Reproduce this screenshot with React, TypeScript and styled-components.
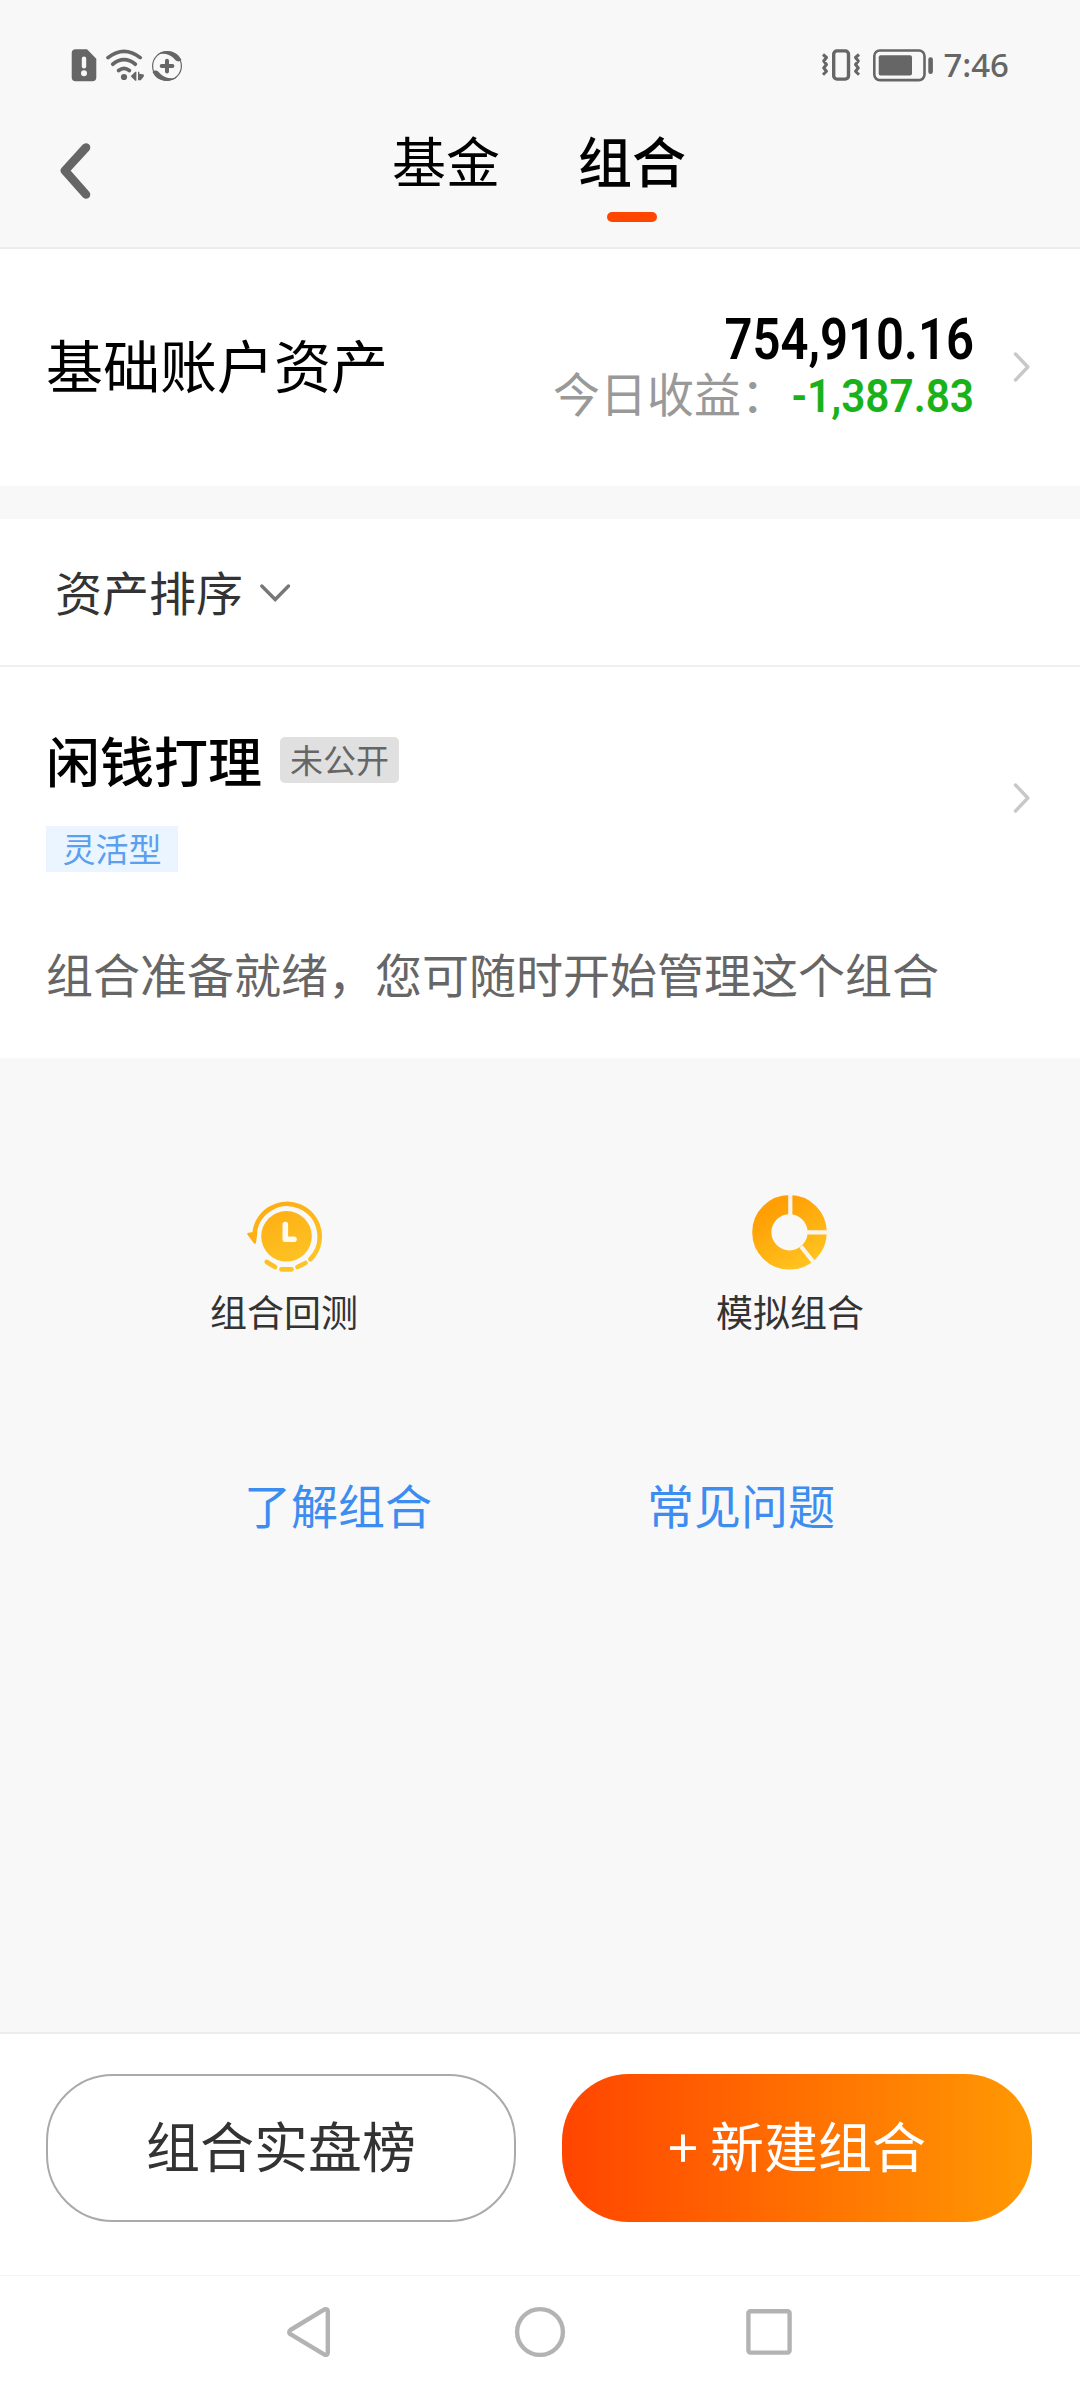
import React from "react";
import styled, { createGlobalStyle } from "styled-components";

const GlobalStyle = createGlobalStyle`
  * { box-sizing: border-box; }
  body { margin: 0; background: #f8f8f8; }
  button { font: inherit; margin: 0; padding: 0; border: 0; background: none; }
  svg { display: block; flex: none; }
`;

const Screen = styled.div`
  width: 1080px;
  height: 2388px;
  display: flex;
  flex-direction: column;
  background: #f8f8f8;
  color: #000;
  font-family: "Noto Sans CJK SC", "Noto Sans", sans-serif;
  white-space: nowrap;
  overflow: hidden;
`;

const Header = styled.header`
  height: 249px;
  border-bottom: 2px solid #ececec;
`;

const StatusBar = styled.div`
  height: 101px;
  padding: 45px 71px 0 70px;
  display: flex;
  justify-content: space-between;
`;

const StatusGroup = styled.div`
  height: 40px;
  display: flex;
  align-items: center;
`;

const Clock = styled.span`
  margin-left: 8px;
  font-family: "Noto Sans", sans-serif;
  font-weight: 500;
  font-size: 33px;
  line-height: 40px;
  color: #666;
`;

const TitleBar = styled.nav`
  height: 146px;
  display: flex;
`;

const BackButton = styled.button`
  width: 392px;
  padding: 40px 0 0 56px;
  display: flex;
`;

const Tabs = styled.div`
  display: flex;
  gap: 78px;
  padding-top: 23px;
`;

const Tab = styled.button<{ $active?: boolean }>`
  width: 108px;
  height: 98px;
  display: flex;
  flex-direction: column;
  align-items: center;
  justify-content: space-between;
  font-size: 54px;
  line-height: 72px;
  font-weight: ${(p) => (p.$active ? 500 : 400)};
`;

const TabMark = styled.span`
  width: 50px;
  height: 10px;
  border-radius: 5px;
  background: #ff4600;
`;

const AccountCard = styled.section`
  height: 237px;
  padding: 62px 49px 0 46px;
  display: flex;
  background: #fff;
`;

const AccountTitle = styled.div`
  padding-top: 12px;
  font-size: 57px;
  line-height: 80px;
`;

const AccountFigures = styled.div`
  flex: 1;
  display: flex;
  flex-direction: column;
  align-items: flex-end;
  margin-right: 39px;
`;

const Figure = styled.span<{ $size: number; $color: string; $squeeze: number; $width: number }>`
  width: ${(p) => p.$width}px;
  font-family: Roboto, sans-serif;
  font-weight: 600;
  font-size: ${(p) => p.$size}px;
  color: ${(p) => p.$color};
  display: flex;
  justify-content: flex-end;
  transform: scaleX(${(p) => p.$squeeze});
  transform-origin: right;
`;

const Balance = styled.div`
  height: 55px;
  line-height: 58px;
`;

const Today = styled.div`
  display: flex;
  align-items: baseline;
  font-size: 47px;
  line-height: 52px;
  color: #999;
`;

const ArrowSlot = styled.div<{ $top: number }>`
  padding-top: ${(p) => p.$top}px;
`;

const SortRow = styled.section`
  height: 148px;
  margin-top: 33px;
  padding: 43px 0 0 55px;
  display: flex;
  gap: 16px;
  border-bottom: 2px solid #efefef;
  background: #fff;
  font-size: 47px;
  line-height: 58px;
  color: #333;
`;

const Portfolio = styled.section`
  height: 391px;
  padding: 57px 49px 0 46px;
  display: flex;
  justify-content: space-between;
  background: #fff;
`;

const NameRow = styled.div`
  height: 72px;
  display: flex;
  align-items: center;
  gap: 18px;
  font-size: 54px;
  font-weight: 500;
  line-height: 68px;
`;

const Badge = styled.span<{ $kind: "status" | "type" }>`
  width: ${(p) => (p.$kind === "status" ? 119 : 132)}px;
  height: 46px;
  padding-bottom: 2px;
  display: flex;
  align-items: center;
  justify-content: center;
  border-radius: ${(p) => (p.$kind === "status" ? 5 : 0)}px;
  background: ${(p) => (p.$kind === "status" ? "#e0e0e0" : "#ebf5ff")};
  color: ${(p) => (p.$kind === "status" ? "#666" : "#5a9ff0")};
  font-size: 33px;
  font-weight: 400;
  line-height: 42px;
`;

const TypeRow = styled.div`
  padding-top: 30px;
`;

const Description = styled.p`
  margin: 71px 0 0;
  font-size: 47px;
  line-height: 60px;
  color: #666;
`;

const Tools = styled.section`
  display: grid;
  grid-template-columns: 506px 506px;
  padding: 132px 0 0 31px;
`;

const Tool = styled.button`
  display: flex;
  flex-direction: column;
  align-items: center;
  font-size: 37px;
  line-height: 50px;
  color: #333;
`;

const Links = styled.section`
  flex: 1;
  display: flex;
  gap: 215px;
  padding: 138px 0 0 244px;
`;

const TextLink = styled.a`
  font-size: 47px;
  line-height: 60px;
  color: #3d8df0;
`;

const ActionBar = styled.footer`
  height: 243px;
  padding: 40px 48px 0 46px;
  display: flex;
  justify-content: space-between;
  border-top: 2px solid #ececec;
  background: #fff;
`;

const PillButton = styled.button<{ $primary?: boolean }>`
  width: 470px;
  height: 148px;
  border-radius: 67px;
  padding-bottom: 7px;
  font-size: 54px;
  line-height: 72px;
  border: ${(p) => (p.$primary ? "0" : "2px solid #aaa")};
  color: ${(p) => (p.$primary ? "#fff" : "#333")};
  background: ${(p) => (p.$primary ? "linear-gradient(90deg, #ff4500, #ff9903)" : "#fff")};
`;

const SystemNav = styled.div`
  height: 113px;
  display: flex;
  align-items: center;
  gap: 177px;
  padding-left: 282px;
  border-top: 1px solid #f5f5f5;
  background: #fff;
`;

const StatusIconsLeft = () => (
  <svg width="114" height="40" viewBox="70 45 114 40" fill="#666">
    <path d="M75.7 49.3H87L96.3 58.7V77.3a4 4 0 0 1-4 4H75.7a4 4 0 0 1-4-4v-24a4 4 0 0 1 4-4Z" />
    <path d="M84 58.6v7.6" stroke="#f8f8f8" strokeWidth="4.4" strokeLinecap="round" />
    <circle cx="84" cy="73.3" r="3" fill="#f8f8f8" />
    <g fill="none" stroke="#666" strokeWidth="3.7" strokeLinecap="round">
      <path d="M108 57.6q16-12.6 32.2 0" />
      <path d="M112.7 64.2q11.3-9 22.7 0" />
      <path d="M118.6 70.5q5.4-4.2 10.8 0" />
    </g>
    <circle cx="124" cy="77" r="3.1" />
    <path d="M130.7 76.3L135.2 71.8H136.4V80.800H135.2ZM138 71.8h1.300v2L143.800 74.600v2L140.800 80.200H138Z" />
    <circle cx="167" cy="66" r="14.4" fill="none" stroke="#666" strokeWidth="1.2" />
    <path d="M157 54.6C165 49 177 50 181.500 60C178 63 175.500 60.500 174 58.500C170 54.500 164 52.500 157 54.600Z" />
    <path d="M177 77.400C169 83 157 82 152.500 72C156 69 158.500 71.500 160 73.500C164 77.500 170 79.500 177 77.400Z" />
    <path d="M161.700 66h10.700M167 60.700v10.700" stroke="#666" strokeWidth="4" strokeLinecap="round" />
  </svg>
);

const StatusIconsRight = () => (
  <svg width="114" height="40" viewBox="822 45 114 40" fill="none" stroke="#666">
    <rect x="834.7" y="50.9" width="14.8" height="28.2" rx="3.3" strokeWidth="3.4" />
    <path
      d="M824 54.500l3.500 3-2.800 3.500 2.800 3.500-2.800 3.500 2.800 3.200-3.500 3.500M860 54.500l-3.500 3 2.800 3.500-2.800 3.500 2.800 3.500-2.800 3.200 3.500 3.500"
      strokeWidth="3"
      strokeLinejoin="round"
    />
    <rect x="875.3" y="50.5" width="50.2" height="29.6" rx="5.5" strokeWidth="2.6" />
    <rect x="879.7" y="55.3" width="33.3" height="20.2" rx="2" fill="#666" stroke="none" />
    <rect x="929.3" y="57.3" width="4.6" height="16.7" rx="2.2" fill="#666" stroke="none" />
  </svg>
);

const BackIcon = () => (
  <svg width="40" height="60" viewBox="56 141 40 60" fill="none" stroke="#666" strokeWidth="8.6" strokeLinecap="round" strokeLinejoin="round">
    <path d="M86 147.500L64.900 170.700L86 194.500" />
  </svg>
);

const ArrowRight = () => (
  <svg width="18" height="32" viewBox="0 0 18 32" fill="none" stroke="#c8c8c8" strokeWidth="3.4" strokeLinecap="round" strokeLinejoin="round">
    <path d="M2.500 3L14.800 16L2.500 29" />
  </svg>
);

const ArrowDown = () => (
  <svg width="32" height="62" viewBox="0 0 32 62" fill="none" stroke="#777" strokeWidth="3.4" strokeLinecap="round">
    <path d="M2.800 24L16.200 37.500L29.500 24" />
  </svg>
);

const BacktestIcon = () => (
  <svg width="84" height="96" viewBox="242 1190 84 96" fill="none">
    <defs>
      <linearGradient id="amber" gradientUnits="userSpaceOnUse" x1="265" y1="1200" x2="300" y2="1272">
        <stop offset="0" stopColor="#ffab10" />
        <stop offset="1" stopColor="#fcc628" />
      </linearGradient>
    </defs>
    <circle cx="286.500" cy="1236.300" r="25.300" fill="url(#amber)" />
    <g stroke="url(#amber)" strokeWidth="4.700" strokeLinecap="round">
      <path d="M254.500 1236A32.600 32.600 0 1 1 310.500 1259.200" />
      <path d="M266.800 1262L275 1267M281.500 1269.400H291.500M297.500 1267L305.500 1263" />
    </g>
    <path d="M248.500 1234L256 1233L254.800 1242.500Z" fill="#ffb010" stroke="#ffb010" strokeWidth="2.400" strokeLinejoin="round" />
    <path d="M285.300 1224.500V1239.200H294" stroke="#fffaf0" strokeWidth="5.600" strokeLinecap="round" strokeLinejoin="round" />
  </svg>
);

const PieIcon = () => (
  <svg width="84" height="96" viewBox="748 1190 84 96" fill="none">
    <defs>
      <linearGradient id="orange" gradientUnits="userSpaceOnUse" x1="770" y1="1210" x2="805" y2="1268">
        <stop offset="0" stopColor="#ff9f04" />
        <stop offset="1" stopColor="#ffc420" />
      </linearGradient>
    </defs>
    <circle cx="789.500" cy="1232.300" r="27.700" stroke="url(#orange)" strokeWidth="19.200" />
    <path d="M790.300 1193v24M806 1232.300h24M801 1246.500L814 1262.700" stroke="#f8f5ee" strokeWidth="4.200" />
  </svg>
);

const NavBack = () => (
  <svg width="54" height="54" viewBox="282 2305 54 54" fill="none" stroke="#b3b3b3" strokeWidth="4.4" strokeLinejoin="round">
    <path d="M290.400 2330Q288 2332.200 290.400 2334.200L324.500 2354.600Q327.700 2355.600 327.800 2352.500V2311.500Q327.700 2308.400 324.500 2309.400Z" />
  </svg>
);

const NavHome = () => (
  <svg width="54" height="54" viewBox="0 0 54 54" fill="none" stroke="#b3b3b3" strokeWidth="4.4">
    <circle cx="27" cy="27" r="22.9" />
  </svg>
);

const NavRecent = () => (
  <svg width="54" height="54" viewBox="0 0 54 54" fill="none" stroke="#b3b3b3" strokeWidth="4.4">
    <rect x="4.4" y="6.2" width="41.2" height="41.4" rx="2" />
  </svg>
);

export default function App() {
  return (
    <>
      <GlobalStyle />
      <Screen>
        <Header>
          <StatusBar>
            <StatusGroup>
              <StatusIconsLeft />
            </StatusGroup>
            <StatusGroup>
              <StatusIconsRight />
              <Clock>7:46</Clock>
            </StatusGroup>
          </StatusBar>
          <TitleBar>
            <BackButton aria-label="返回">
              <BackIcon />
            </BackButton>
            <Tabs>
              <Tab>基金</Tab>
              <Tab $active>
                组合
                <TabMark />
              </Tab>
            </Tabs>
          </TitleBar>
        </Header>

        <AccountCard>
          <AccountTitle>基础账户资产</AccountTitle>
          <AccountFigures>
            <Balance>
              <Figure $size={57} $color="#000" $squeeze={0.86} $width={252}>754,910.16</Figure>
            </Balance>
            <Today>
              <span>今日收益：</span>
              <Figure $size={47} $color="#19b219" $squeeze={0.9} $width={186}>-1,387.83</Figure>
            </Today>
          </AccountFigures>
          <ArrowSlot $top={40}>
            <ArrowRight />
          </ArrowSlot>
        </AccountCard>

        <SortRow>
          资产排序
          <ArrowDown />
        </SortRow>

        <Portfolio>
          <div>
            <NameRow>
              闲钱打理
              <Badge $kind="status">未公开</Badge>
            </NameRow>
            <TypeRow>
              <Badge $kind="type">灵活型</Badge>
            </TypeRow>
            <Description>组合准备就绪，您可随时开始管理这个组合</Description>
          </div>
          <ArrowSlot $top={58}>
            <ArrowRight />
          </ArrowSlot>
        </Portfolio>

        <Tools>
          <Tool>
            <BacktestIcon />
            组合回测
          </Tool>
          <Tool>
            <PieIcon />
            模拟组合
          </Tool>
        </Tools>

        <Links>
          <TextLink>了解组合</TextLink>
          <TextLink>常见问题</TextLink>
        </Links>

        <ActionBar>
          <PillButton>组合实盘榜</PillButton>
          <PillButton $primary>+ 新建组合</PillButton>
        </ActionBar>

        <SystemNav>
          <NavBack />
          <NavHome />
          <NavRecent />
        </SystemNav>
      </Screen>
    </>
  );
}
